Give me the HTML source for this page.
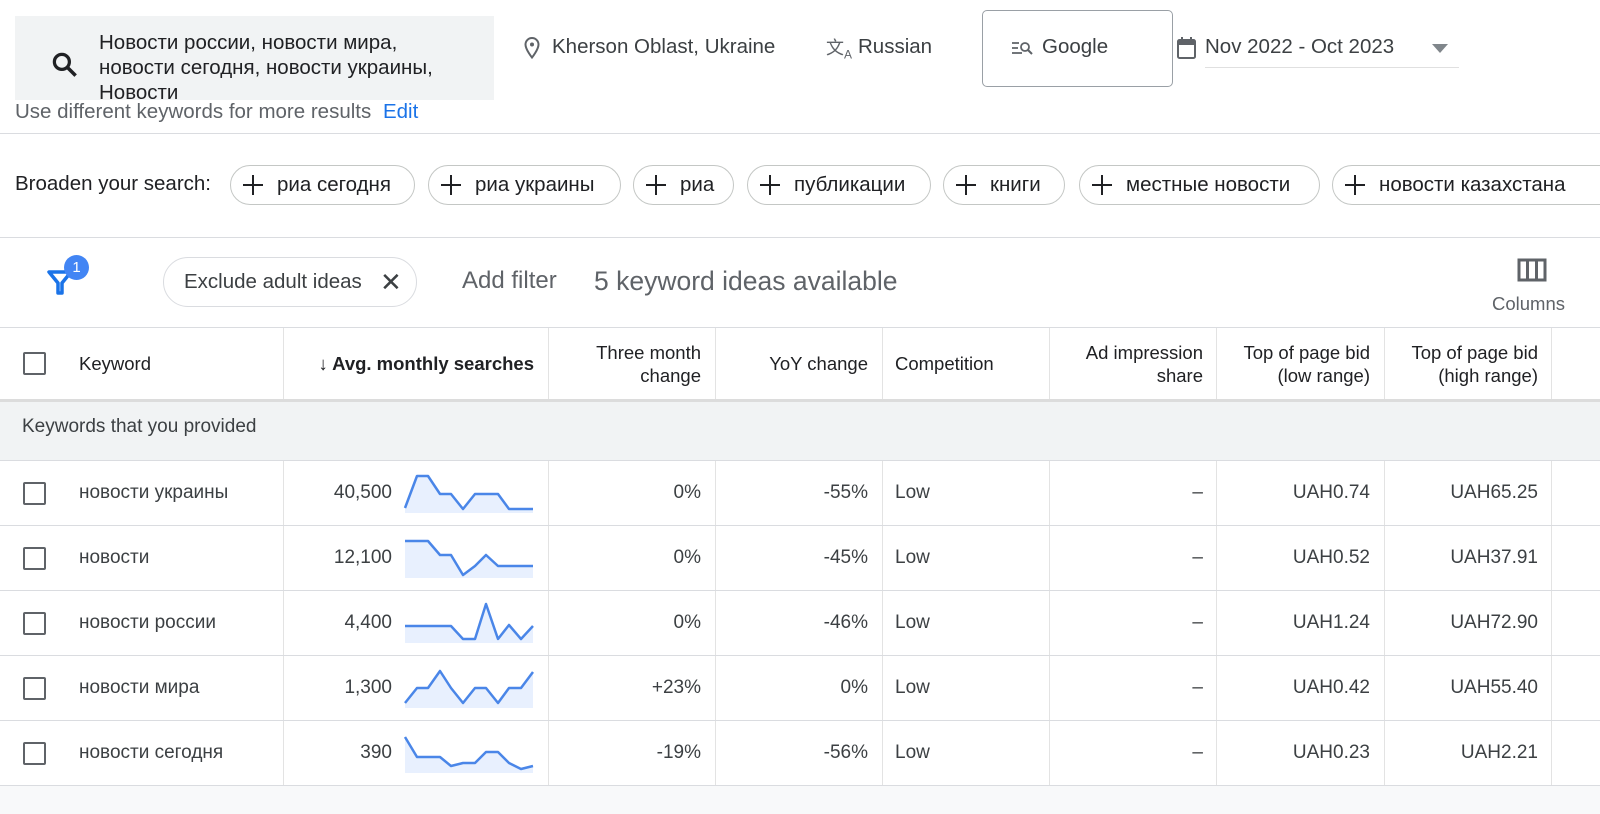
<!DOCTYPE html>
<html><head><meta charset="utf-8"><style>
*{margin:0;padding:0;box-sizing:border-box}
body{width:1600px;height:814px;overflow:hidden;background:#fff;font-family:"Liberation Sans","Noto Sans CJK SC",sans-serif;color:#3c4043;position:relative}
.a{position:absolute;white-space:nowrap}
.hl{position:absolute;left:0;width:1600px;height:1px;background:#dadce0}
.chip{position:absolute;top:165px;height:40px;border:1px solid #c4c7c5;border-radius:20px;font-size:20.5px;color:#202124;line-height:38px;padding-left:46px}
.chip:before,.chip:after{content:"";position:absolute;background:#202124}
.chip:before{left:12px;top:18px;width:20px;height:2px}
.chip:after{left:21px;top:9px;width:2px;height:20px}
.vl{position:absolute;top:328px;width:1px;height:458px;background:#e3e3e3}
.th{position:absolute;font-size:18.5px;color:#202124;line-height:23px;text-align:right;white-space:nowrap}
.cb{position:absolute;left:23px;width:23px;height:23px;border:2px solid #5f6368;border-radius:2px}
.c{position:absolute;font-size:19px;color:#3c4043;text-align:right;white-space:nowrap}
</style></head><body>
<div class="a" style="left:15px;top:16px;width:479px;height:84px;background:#f1f3f4"></div>
<svg class="a" style="left:50px;top:50px" width="30" height="30" viewBox="0 0 24 24"><circle cx="9.5" cy="9.5" r="6" fill="none" stroke="#202124" stroke-width="2.6"/><path d="M14 14l6.5 6.5" stroke="#202124" stroke-width="2.8"/></svg>
<div class="a" style="left:99px;top:30px;font-size:20.5px;line-height:25px;color:#202124">Новости россии, новости мира,<br>новости сегодня, новости украины,<br>Новости</div>
<div class="a" style="left:15px;top:100px;font-size:20.5px;color:#5f6368">Use different keywords for more results <span style="color:#1a73e8;margin-left:6px">Edit</span></div>
<svg class="a" style="left:522px;top:36px" width="20" height="24" viewBox="0 0 20 24"><path d="M10 2a6.5 6.5 0 0 0-6.5 6.5c0 5 6.5 13 6.5 13s6.5-8 6.5-13A6.5 6.5 0 0 0 10 2z" fill="none" stroke="#5f6368" stroke-width="2"/><circle cx="10" cy="8.5" r="2" fill="#5f6368"/></svg>
<div class="a" style="left:552px;top:35px;font-size:20.5px;color:#3c4043">Kherson Oblast, Ukraine</div>
<div class="a" style="left:826px;top:34px;font-size:18px;color:#5f6368">文<sub style="font-size:12px">A</sub></div>
<div class="a" style="left:858px;top:35px;font-size:20.5px;color:#3c4043">Russian</div>
<div class="a" style="left:982px;top:10px;width:191px;height:77px;border:1px solid #9aa0a6;border-radius:5px"></div>
<svg class="a" style="left:1011px;top:39px" width="22" height="18" viewBox="0 0 22 18"><path d="M1 4h7M1 9h6M1 14h10" stroke="#5f6368" stroke-width="1.8"/><circle cx="14" cy="8" r="4" fill="none" stroke="#5f6368" stroke-width="1.8"/><path d="M17 11l4 4" stroke="#5f6368" stroke-width="2"/></svg>
<div class="a" style="left:1042px;top:35px;font-size:20.5px;color:#3c4043">Google</div>
<svg class="a" style="left:1176px;top:36px" width="22" height="24" viewBox="0 0 22 24"><rect x="2" y="4" width="17" height="18" rx="1.5" fill="none" stroke="#5f6368" stroke-width="2"/><rect x="2" y="4" width="17" height="5" fill="#5f6368"/><path d="M6 1v4M15 1v4" stroke="#5f6368" stroke-width="2"/></svg>
<div class="a" style="left:1205px;top:35px;font-size:20.5px;color:#3c4043">Nov 2022 - Oct 2023</div>
<div class="a" style="left:1432px;top:44px;width:0;height:0;border-left:8px solid transparent;border-right:8px solid transparent;border-top:9px solid #80868b"></div>
<div class="a" style="left:1205px;top:67px;width:254px;height:1px;background:#e0e0e0"></div>
<div class="hl" style="top:133px"></div>
<div class="a" style="left:15px;top:172px;font-size:20.5px;color:#202124">Broaden your search:</div>
<div class="chip" style="left:230px;width:185px">риа сегодня</div>
<div class="chip" style="left:428px;width:193px">риа украины</div>
<div class="chip" style="left:633px;width:101px">риа</div>
<div class="chip" style="left:747px;width:184px">публикации</div>
<div class="chip" style="left:943px;width:122px">книги</div>
<div class="chip" style="left:1079px;width:241px">местные новости</div>
<div class="chip" style="left:1332px;width:300px">новости казахстана</div>
<div class="hl" style="top:237px"></div>
<svg class="a" style="left:46px;top:266px" width="28" height="30" viewBox="0 0 28 30"><path d="M3 6h22L16 17v10h-4V17z" fill="none" stroke="#1a73e8" stroke-width="3.5" stroke-linejoin="round"/></svg>
<div class="a" style="left:64px;top:255px;width:25px;height:25px;border-radius:50%;background:#4285f4;color:#fff;font-size:15px;line-height:25px;text-align:center">1</div>
<div class="a" style="left:163px;top:257px;width:254px;height:50px;border:1px solid #dadce0;border-radius:25px;font-size:20.5px;color:#3c4043;line-height:48px;padding-left:20px">Exclude adult ideas<span style="position:absolute;left:216px;font-size:26px;color:#3c4043">✕</span></div>
<div class="a" style="left:462px;top:267px;font-size:24px;color:#5f6368">Add filter</div>
<div class="a" style="left:594px;top:266px;font-size:26.5px;color:#5f6368">5 keyword ideas available</div>
<svg class="a" style="left:1517px;top:257px" width="30" height="26" viewBox="0 0 30 26"><path d="M2 3h26v20H2z M10.5 3v20 M19.5 3v20" fill="none" stroke="#5f6368" stroke-width="3"/></svg>
<div class="a" style="left:1492px;top:293px;font-size:18.5px;color:#5f6368">Columns</div>
<div class="hl" style="top:327px"></div>
<div class="cb" style="top:352px"></div>
<div class="th" style="left:79px;top:352px;font-weight:500;text-align:left">Keyword</div>
<div class="th" style="left:300px;top:352px;width:234px;font-weight:bold">↓ Avg. monthly searches</div>
<div class="th" style="left:560px;top:341px;width:141px">Three month<br>change</div>
<div class="th" style="left:720px;top:352px;width:148px">YoY change</div>
<div class="th" style="left:895px;top:352px;text-align:left">Competition</div>
<div class="th" style="left:1050px;top:341px;width:153px">Ad impression<br>share</div>
<div class="th" style="left:1220px;top:341px;width:150px">Top of page bid<br>(low range)</div>
<div class="th" style="left:1390px;top:341px;width:148px">Top of page bid<br>(high range)</div>
<div class="vl" style="left:283px"></div><div class="vl" style="left:548px"></div><div class="vl" style="left:715px"></div><div class="vl" style="left:882px"></div><div class="vl" style="left:1049px"></div><div class="vl" style="left:1216px"></div><div class="vl" style="left:1384px"></div><div class="vl" style="left:1551px"></div>
<div class="a" style="left:0;top:399px;width:1600px;height:62px;background:#f1f3f4;border-top:3px solid #dcdcdc"></div>
<div class="a" style="left:22px;top:416px;font-size:19px;color:#3c4043">Keywords that you provided</div>
<div class="hl" style="top:460px"></div><div class="hl" style="top:525px"></div><div class="hl" style="top:590px"></div><div class="hl" style="top:655px"></div><div class="hl" style="top:720px"></div><div class="hl" style="top:785px"></div>
<div class="a" style="left:0;top:786px;width:1600px;height:28px;background:#f8f9fa"></div>

<div class="cb" style="top:482px"></div><div class="c" style="left:79px;top:482px;text-align:left">новости украины</div><div class="c" style="left:292px;top:482px;width:100px">40,500</div>
<div class="c" style="left:600px;top:482px;width:101px">0%</div><div class="c" style="left:760px;top:482px;width:108px">-55%</div><div class="c" style="left:895px;top:482px">Low</div><div class="c" style="left:1100px;top:482px;width:103px">–</div><div class="c" style="left:1250px;top:482px;width:120px">UAH0.74</div><div class="c" style="left:1420px;top:482px;width:118px">UAH65.25</div>
<div class="cb" style="top:547px"></div><div class="c" style="left:79px;top:547px;text-align:left">новости</div><div class="c" style="left:292px;top:547px;width:100px">12,100</div>
<div class="c" style="left:600px;top:547px;width:101px">0%</div><div class="c" style="left:760px;top:547px;width:108px">-45%</div><div class="c" style="left:895px;top:547px">Low</div><div class="c" style="left:1100px;top:547px;width:103px">–</div><div class="c" style="left:1250px;top:547px;width:120px">UAH0.52</div><div class="c" style="left:1420px;top:547px;width:118px">UAH37.91</div>
<div class="cb" style="top:612px"></div><div class="c" style="left:79px;top:612px;text-align:left">новости россии</div><div class="c" style="left:292px;top:612px;width:100px">4,400</div>
<div class="c" style="left:600px;top:612px;width:101px">0%</div><div class="c" style="left:760px;top:612px;width:108px">-46%</div><div class="c" style="left:895px;top:612px">Low</div><div class="c" style="left:1100px;top:612px;width:103px">–</div><div class="c" style="left:1250px;top:612px;width:120px">UAH1.24</div><div class="c" style="left:1420px;top:612px;width:118px">UAH72.90</div>
<div class="cb" style="top:677px"></div><div class="c" style="left:79px;top:677px;text-align:left">новости мира</div><div class="c" style="left:292px;top:677px;width:100px">1,300</div>
<div class="c" style="left:600px;top:677px;width:101px">+23%</div><div class="c" style="left:760px;top:677px;width:108px">0%</div><div class="c" style="left:895px;top:677px">Low</div><div class="c" style="left:1100px;top:677px;width:103px">–</div><div class="c" style="left:1250px;top:677px;width:120px">UAH0.42</div><div class="c" style="left:1420px;top:677px;width:118px">UAH55.40</div>
<div class="cb" style="top:742px"></div><div class="c" style="left:79px;top:742px;text-align:left">новости сегодня</div><div class="c" style="left:292px;top:742px;width:100px">390</div>
<div class="c" style="left:600px;top:742px;width:101px">-19%</div><div class="c" style="left:760px;top:742px;width:108px">-56%</div><div class="c" style="left:895px;top:742px">Low</div><div class="c" style="left:1100px;top:742px;width:103px">–</div><div class="c" style="left:1250px;top:742px;width:120px">UAH0.23</div><div class="c" style="left:1420px;top:742px;width:118px">UAH2.21</div>

<svg class="a" style="left:0;top:0" width="1600" height="814">
<g fill="#e8f0fe" stroke="none">
<path d="M405 508L417 476L428 476L440 494L451 494L463 509L475 494L486 494L498 494L509 509L521 509L533 509L533 513L405 513Z"/>
<path d="M405 541L417 541L428 541L440 555L451 555L463 575L475 566L486 555L498 566L509 566L521 566L533 566L533 578L405 578Z"/>
<path d="M405 626L417 626L428 626L440 626L451 626L463 639L475 639L486 604L498 639L509 625L521 639L533 626L533 643L405 643Z"/>
<path d="M405 703L417 688L428 688L440 671L451 688L463 703L475 688L486 688L498 703L509 688L521 688L533 672L533 708L405 708Z"/>
<path d="M405 737L417 757L428 757L440 757L451 766L463 763L475 763L486 752L498 752L509 763L521 769L533 766L533 773L405 773Z"/>
</g>
<g fill="none" stroke="#4a86e8" stroke-width="2.5" stroke-linejoin="round">
<path d="M405 508L417 476L428 476L440 494L451 494L463 509L475 494L486 494L498 494L509 509L521 509L533 509"/>
<path d="M405 541L417 541L428 541L440 555L451 555L463 575L475 566L486 555L498 566L509 566L521 566L533 566"/>
<path d="M405 626L417 626L428 626L440 626L451 626L463 639L475 639L486 604L498 639L509 625L521 639L533 626"/>
<path d="M405 703L417 688L428 688L440 671L451 688L463 703L475 688L486 688L498 703L509 688L521 688L533 672"/>
<path d="M405 737L417 757L428 757L440 757L451 766L463 763L475 763L486 752L498 752L509 763L521 769L533 766"/>
</g>
</svg>
</body></html>
